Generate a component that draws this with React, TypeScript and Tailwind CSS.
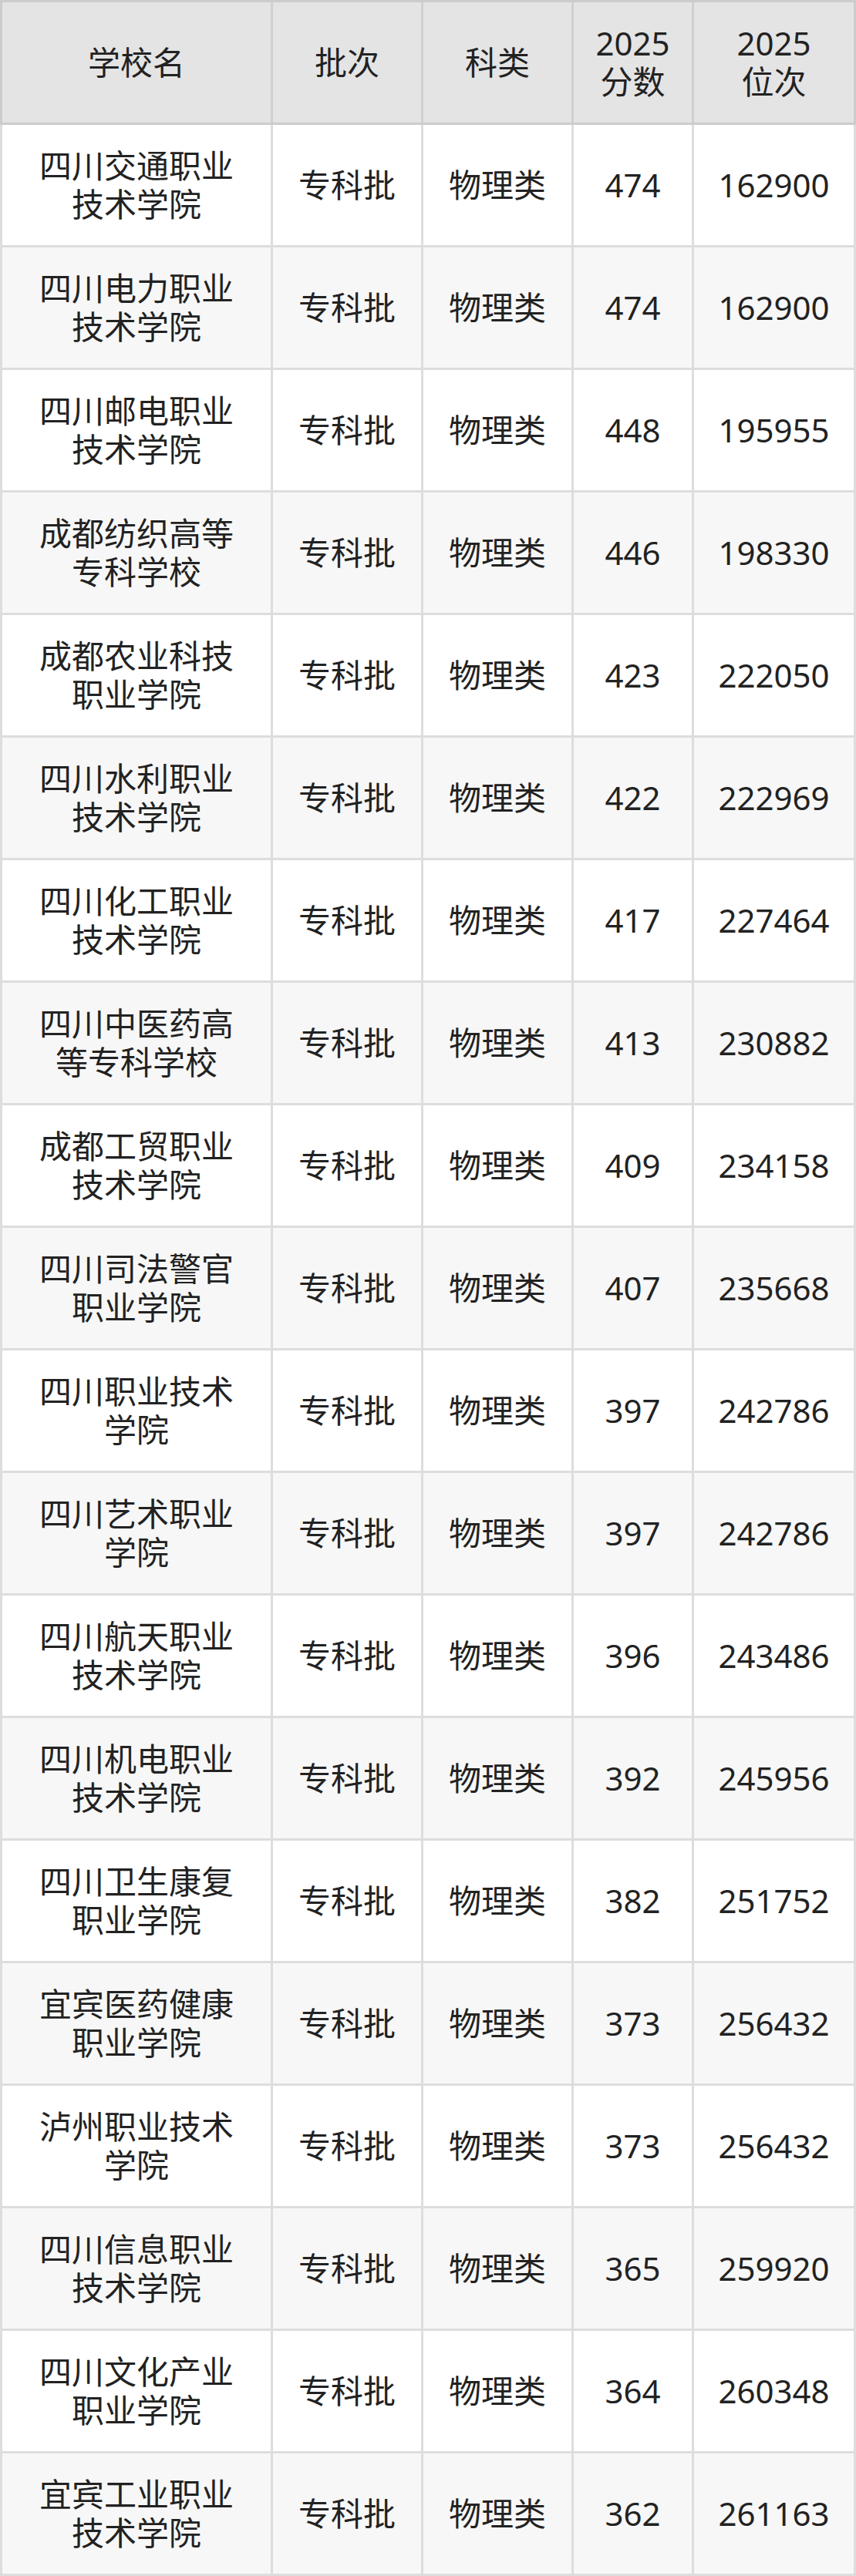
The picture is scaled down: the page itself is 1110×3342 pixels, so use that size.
const HEADERS: string[][] = [["学校名"], ["批次"], ["科类"], ["2025", "分数"], ["2025", "位次"]];

const ROWS: [string, string, string][] = [
  ["四川交通职业技术学院", "474", "162900"],
  ["四川电力职业技术学院", "474", "162900"],
  ["四川邮电职业技术学院", "448", "195955"],
  ["成都纺织高等专科学校", "446", "198330"],
  ["成都农业科技职业学院", "423", "222050"],
  ["四川水利职业技术学院", "422", "222969"],
  ["四川化工职业技术学院", "417", "227464"],
  ["四川中医药高等专科学校", "413", "230882"],
  ["成都工贸职业技术学院", "409", "234158"],
  ["四川司法警官职业学院", "407", "235668"],
  ["四川职业技术学院", "397", "242786"],
  ["四川艺术职业学院", "397", "242786"],
  ["四川航天职业技术学院", "396", "243486"],
  ["四川机电职业技术学院", "392", "245956"],
  ["四川卫生康复职业学院", "382", "251752"],
  ["宜宾医药健康职业学院", "373", "256432"],
  ["泸州职业技术学院", "373", "256432"],
  ["四川信息职业技术学院", "365", "259920"],
  ["四川文化产业职业学院", "364", "260348"],
  ["宜宾工业职业技术学院", "362", "261163"],
];

const cols = "grid grid-cols-[348px_192px_192px_153px_207px] gap-x-[3px]";
const cell =
  "flex h-[156px] flex-col items-center justify-center px-[30px] text-center text-[42px] leading-[50px] text-[#222222]";

export default function App() {
  return (
    <div
      className="w-[1110px] bg-white"
      style={{ fontFamily: '"Noto Sans", "Noto Sans CJK SC", sans-serif' }}
    >
      <div className={`${cols} border-[3px] border-[#cccccc] bg-[#d0d0d0]`}>
        {HEADERS.map((lines) => (
          <div key={lines.join("")} className={`${cell} bg-[#e4e4e4]`}>
            {lines.map((l) => (
              <span key={l}>{l}</span>
            ))}
          </div>
        ))}
      </div>
      <div className="flex flex-col gap-y-[3px] border-x-[3px] border-b-[3px] border-[#dddddd] bg-[#dddddd]">
        {ROWS.map(([name, score, rank], i) => {
          const bg = i % 2 === 0 ? "bg-white" : "bg-[#f7f7f7]";
          return (
            <div key={i} className={cols}>
              <div className={`${cell} ${bg}`}>{name}</div>
              <div className={`${cell} ${bg}`}>专科批</div>
              <div className={`${cell} ${bg}`}>物理类</div>
              <div className={`${cell} ${bg}`}>{score}</div>
              <div className={`${cell} ${bg}`}>{rank}</div>
            </div>
          );
        })}
      </div>
    </div>
  );
}
